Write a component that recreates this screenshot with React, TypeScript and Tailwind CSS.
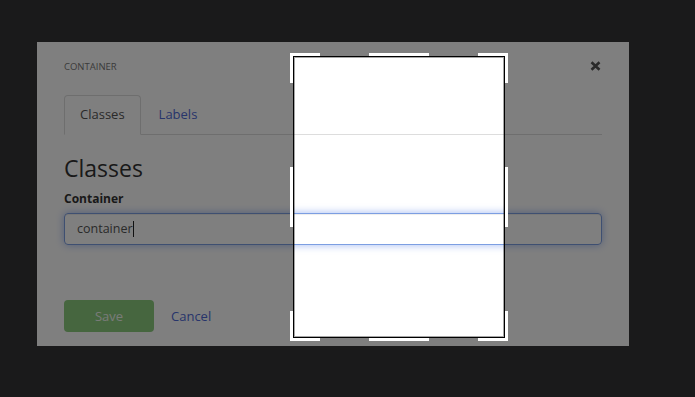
import { useState } from 'react';

const font = { fontFamily: '"Open Sans", "Noto Sans", Arial, sans-serif' };

function CloseIcon() {
  return (
    <svg width="11" height="10" viewBox="0 0 11 10" className="block">
      <path d="M1.5 1.2 L9.5 8.8 M9.5 1.2 L1.5 8.8" stroke="#555" strokeWidth="2.6" strokeLinecap="butt" />
    </svg>
  );
}

function CropFrame() {
  const handles = [
    'top-0 left-0 w-[30px] h-[3px]',
    'top-0 left-0 w-[3px] h-[30px]',
    'top-0 right-0 w-[30px] h-[3px]',
    'top-0 right-0 w-[3px] h-[30px]',
    'bottom-0 left-0 w-[30px] h-[3px]',
    'bottom-0 left-0 w-[3px] h-[30px]',
    'bottom-0 right-0 w-[30px] h-[3px]',
    'bottom-0 right-0 w-[3px] h-[30px]',
    'top-0 left-[79px] w-[60px] h-[3px]',
    'bottom-0 left-[79px] w-[60px] h-[3px]',
    'left-0 top-[114px] w-[3px] h-[60px]',
    'right-0 top-[114px] w-[3px] h-[60px]',
  ];
  return (
    <div className="absolute left-[253px] top-[11px] w-[218px] h-[288px]">
      {/* clear window, everything around it is dimmed */}
      <div className="absolute inset-[3px] border border-black shadow-[0_0_0_9999px_rgba(0,0,0,0.5),inset_0_0_0_1px_rgba(0,0,0,0.35)]" />
      {handles.map((cls, i) => (
        <div key={i} className={`absolute bg-white ${cls}`} />
      ))}
    </div>
  );
}

export default function App() {
  const [tab, setTab] = useState('classes');

  return (
    <div className="min-h-[397px] w-full bg-[#1a1a1b] pt-[42px] pl-[37px]" style={font}>
      <div className="relative w-[592px] h-[304px] overflow-hidden bg-white px-[27px]">
        {/* Header */}
        <div className="flex items-center justify-between h-[12px] mt-[19px]">
          <span className="text-[9.5px] leading-[12px] text-[#777] uppercase">Container</span>
          <button className="mr-[1px] -mt-[2px]">
            <CloseIcon />
          </button>
        </div>

        {/* Tabs */}
        <ul className="flex mt-[22px] border-b border-[#ddd]">
          <li className="-mb-px mr-[2px]">
            <button
              onClick={() => setTab('classes')}
              className={`h-[40px] px-[15px] pb-[1px] flex items-center text-[13px] rounded-t-[4px] border ${
                tab === 'classes'
                  ? 'border-[#ddd] border-b-transparent bg-white text-[#555]'
                  : 'border-transparent text-[#4f6ad6]'
              }`}
            >
              Classes
            </button>
          </li>
          <li className="-mb-px">
            <button
              onClick={() => setTab('labels')}
              className={`h-[40px] px-[15px] pb-[1px] flex items-center text-[13px] rounded-t-[4px] border ${
                tab === 'labels'
                  ? 'border-[#ddd] border-b-transparent bg-white text-[#555]'
                  : 'border-transparent text-[#4f6ad6]'
              }`}
            >
              Labels
            </button>
          </li>
        </ul>

        {/* Body */}
        <h2 className="mt-[21px] text-[23px] leading-[25px] text-[#333]">Classes</h2>
        <label className="block mt-[10px] text-[12px] leading-[16px] font-bold text-[#333]">Container</label>
        <div className="mt-[6px] h-[32px] flex items-center px-[12px] rounded-[4px] border border-[#7c9ee2] shadow-[inset_0_1px_1px_rgba(0,0,0,0.075),0_0_8px_rgba(102,140,233,0.6)]">
          <span className="text-[12.5px] text-[#555]">container</span>
          <span className="w-px h-[16px] bg-[#222]" />
        </div>

        {/* Footer */}
        <div className="flex items-center mt-[55px]">
          <button className="w-[90px] h-[32px] pt-[1px] rounded-[4px] bg-[#8ccc7f] text-[13px] text-[#f2f6f0]">Save</button>
          <button className="ml-[17px] pt-[1px] text-[13px] text-[#4f6ad6]">Cancel</button>
        </div>

        <CropFrame />
      </div>
    </div>
  );
}
